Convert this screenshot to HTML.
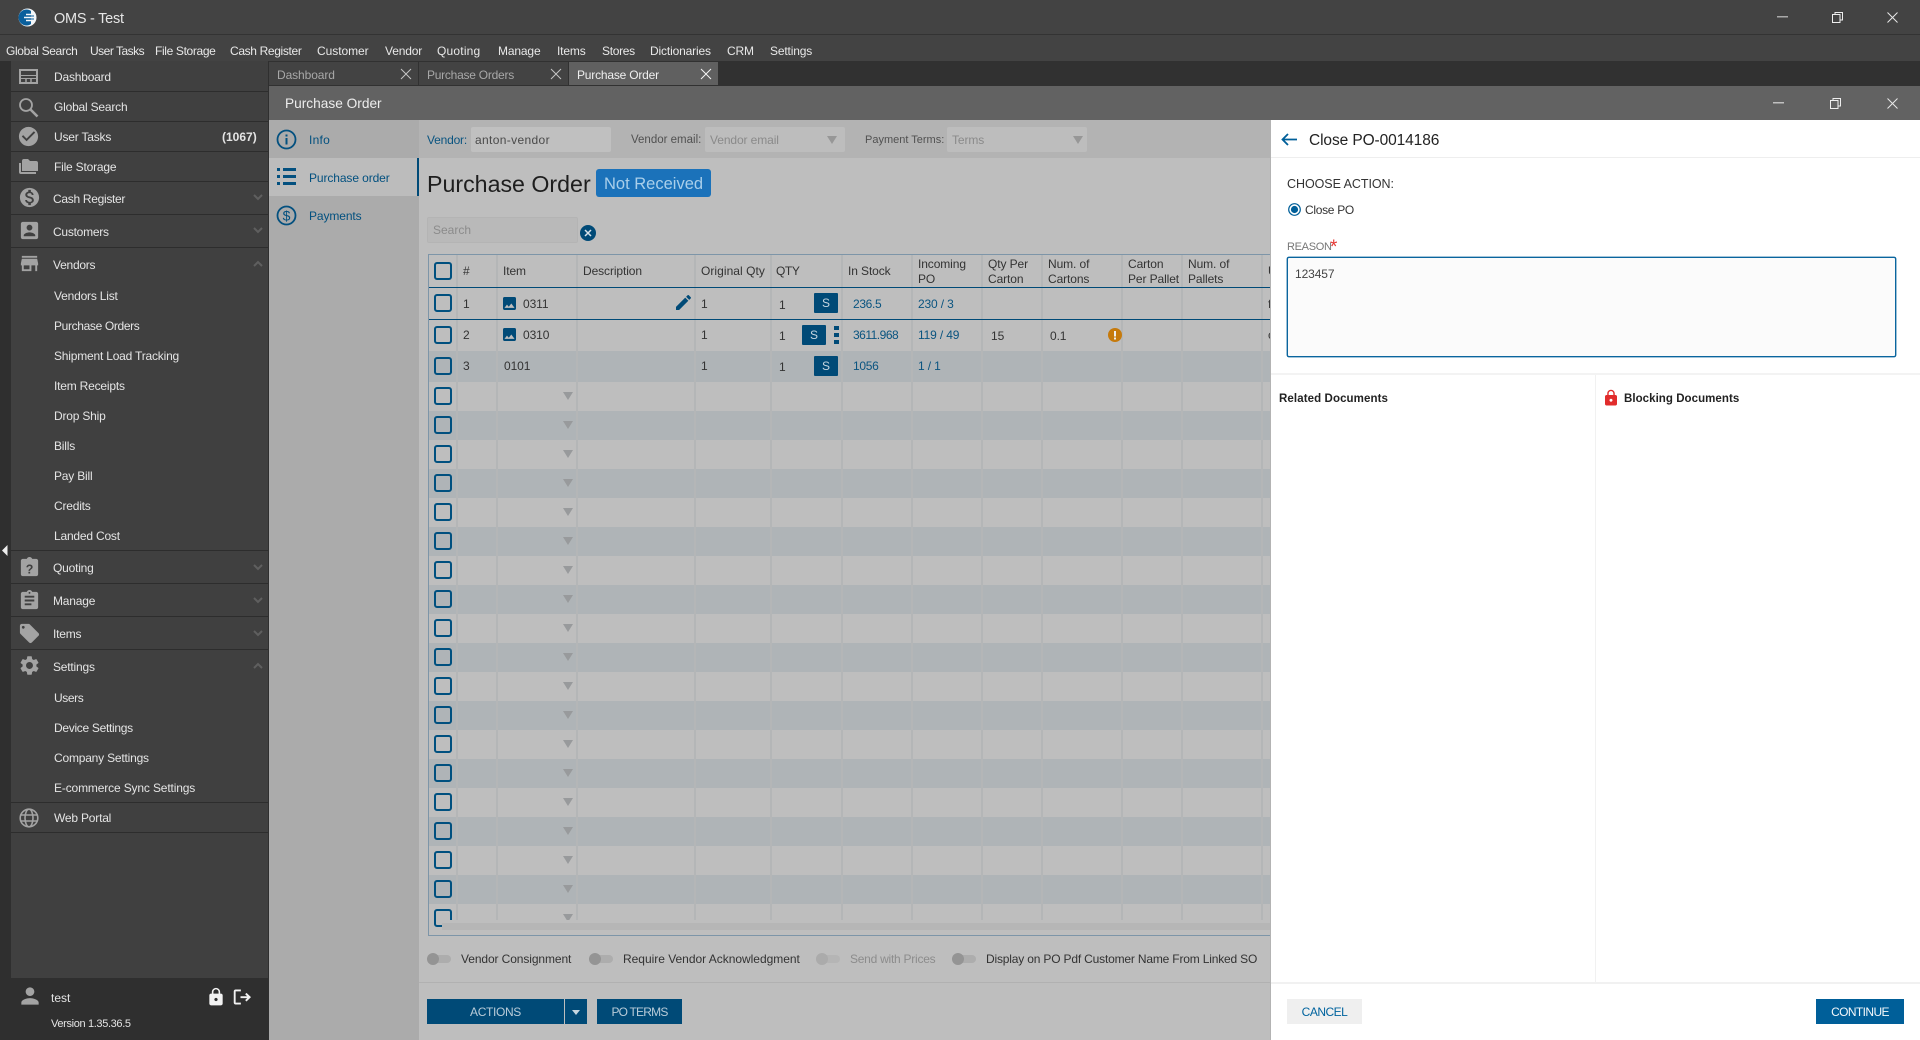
<!DOCTYPE html>
<html><head><meta charset="utf-8"><title>OMS - Test</title>
<style>
html,body{margin:0;padding:0;width:1920px;height:1040px;overflow:hidden;background:#404040;font-family:"Liberation Sans",sans-serif;font-size:12px}
.a{position:absolute}
.t{position:absolute;white-space:nowrap;line-height:16px;height:16px}
svg{position:absolute;overflow:visible}
.m{color:#e8e8e8;top:43px;letter-spacing:-.15px}
.s{color:#e4e4e4;left:54px;letter-spacing:-.2px;margin-top:1px}
.s2{left:53px}
.ln{position:absolute;left:11px;width:257px;height:1px;background:#2d2d2d}
.ic{fill:#a3a3a3}
.ch{fill:none;stroke:#5f5f5f;stroke-width:2}
.n{color:#02507f;left:309px;letter-spacing:-.1px}
.tb{color:#333;letter-spacing:-.1px}
.lk{color:#0a5480;letter-spacing:-.15px}
.vl{position:absolute;top:0;width:2px;height:680px;background:#b4b6b7}
.cb{position:absolute;left:5px;width:14px;height:14px;border:2px solid #00507f;border-radius:3px;box-sizing:content-box}
.ar{position:absolute;left:134px;width:0;height:0;border-left:5px solid transparent;border-right:5px solid transparent;border-top:8px solid #989a9c}
.alt{position:absolute;left:0;width:842px;height:29px;background:#afb4b7}
.sb{position:absolute;width:24px;height:20px;background:#004a77;color:#c6d6e0;text-align:center;line-height:20px;font-size:12px;border-radius:1px}
.tr{position:absolute;top:955px;width:24px;height:8px;background:#adadad;border-radius:4px}
.tr i{position:absolute;left:0;top:-2px;width:12px;height:12px;border-radius:6px;background:#949494}
.dd{position:absolute;width:0;height:0;border-left:5px solid transparent;border-right:5px solid transparent;border-top:8px solid #979797;top:136px}
</style></head>
<body>
<!-- top bars -->
<div class="a" style="left:0;top:0;width:1920px;height:61px;background:#434343"></div>
<div class="a" style="left:0;top:34px;width:1920px;height:1px;background:#333"></div>
<svg style="left:18px;top:8px" width="19" height="19" viewBox="0 0 19 19"><circle cx="9.500" cy="9.500" r="9" fill="#f4f6f8"/><circle cx="8.500" cy="9.500" r="8" fill="#0a5f9c"/><path d="M8 6.500h8M6 9.500h11M8 12.500h8" stroke="#f4f6f8" stroke-width="1.500"/><path d="M13 2.500C15.500 4 17.500 7 17.500 9.500S15.500 15 13 16.500Z" fill="#f4f6f8"/><path d="M10 8h6M10 11h6" stroke="#0a5f9c" stroke-width="1"/></svg>
<div class="t" style="left:54px;top:11px;color:#e6e6e6;font-size:14.500px;letter-spacing:-.25px">OMS - Test</div>
<svg style="left:1777px;top:16px" width="11" height="2"><rect width="11" height="1.500" fill="#a9a9a9"/></svg>
<svg style="left:1832px;top:12px" width="11" height="11" fill="none" stroke="#eee"><rect x=".5" y="2.500" width="7.500" height="8"/><path d="M3 2.500V.5h7.500v7.500H8"/></svg>
<svg style="left:1887px;top:12px" width="11" height="11" stroke="#e8e8e8" stroke-width="1"><path d="M.5.5l10 10M10.500.5l-10 10"/></svg>
<div class="t m" style="left:6px;letter-spacing:-.35px">Global Search</div>
<div class="t m" style="left:90px;letter-spacing:-.5px">User Tasks</div>
<div class="t m" style="left:155px;letter-spacing:-.35px">File Storage</div>
<div class="t m" style="left:230px;letter-spacing:-.35px">Cash Register</div>
<div class="t m" style="left:317px;letter-spacing:-.05px">Customer</div>
<div class="t m" style="left:385px">Vendor</div>
<div class="t m" style="left:437px;letter-spacing:.2px">Quoting</div>
<div class="t m" style="left:498px">Manage</div>
<div class="t m" style="left:557px">Items</div>
<div class="t m" style="left:602px;letter-spacing:-.3px">Stores</div>
<div class="t m" style="left:650px">Dictionaries</div>
<div class="t m" style="left:727px">CRM</div>
<div class="t m" style="left:770px">Settings</div>

<!-- left strip + sidebar -->
<div class="a" style="left:0;top:61px;width:11px;height:979px;background:#2f2f2f"></div>
<div class="a" style="left:11px;top:61px;width:257px;height:917px;background:#404040"></div>
<div class="a" style="left:0;top:978px;width:269px;height:62px;background:#2f2f2f"></div>
<div class="a" style="left:268px;top:61px;width:1px;height:979px;background:#2f2f2f"></div>
<svg style="left:2px;top:545px" width="6" height="11"><path d="M5.500 0v11L0 5.500Z" fill="#eee"/></svg>
<div class="ln" style="top:91px"></div><div class="ln" style="top:121px"></div><div class="ln" style="top:151px"></div><div class="ln" style="top:181px"></div><div class="ln" style="top:214px"></div><div class="ln" style="top:247px"></div><div class="ln" style="top:550px"></div><div class="ln" style="top:583px"></div><div class="ln" style="top:616px"></div><div class="ln" style="top:649px"></div><div class="ln" style="top:802px"></div><div class="ln" style="top:832px"></div>

<svg style="left:19px;top:69px" width="19" height="15" fill="none" stroke="#a3a3a3" stroke-width="2"><rect x="1" y="1" width="17" height="13"/><path d="M1 6.500h17M1 9.500h17" stroke-width="1"/><path d="M7 9v5M12 9v5" stroke-width="1.500"/></svg>
<svg style="left:18px;top:97px" width="21" height="21" viewBox="0 0 21 21" fill="none" stroke="#a3a3a3"><circle cx="8" cy="8" r="6" stroke-width="1.800"/><path d="M12.500 12.500l7 7" stroke-width="2.600"/></svg>
<svg class="ic" style="left:17px;top:125px" width="23" height="23" viewBox="0 0 24 24"><path d="M12 2C6.480 2 2 6.480 2 12s4.480 10 10 10 10-4.480 10-10S17.520 2 12 2zm-2 15l-5-5 1.410-1.410L10 14.170l7.590-7.590L19 8l-9 9z"/></svg>
<svg class="ic" style="left:19px;top:159px" width="19" height="15" viewBox="0 0 19 15"><path d="M0 4h2v9h15v2H2a2 2 0 0 1-2-2Z"/><path d="M3 2a2 2 0 0 1 2-2h4l2 2h6a2 2 0 0 1 2 2v8H3Z"/></svg>
<svg class="ic" style="left:18px;top:186px" width="23" height="23" viewBox="0 0 24 24"><path d="M12 2C6.480 2 2 6.480 2 12s4.480 10 10 10 10-4.480 10-10S17.520 2 12 2zm1.410 16.090V20h-2.670v-1.930c-1.710-.36-3.160-1.460-3.270-3.400h1.960c.1 1.050.82 1.870 2.650 1.870 1.960 0 2.400-.98 2.400-1.590 0-.83-.44-1.610-2.670-2.140-2.480-.6-4.180-1.620-4.180-3.670 0-1.720 1.390-2.840 3.110-3.210V4h2.670v1.950c1.860.45 2.790 1.860 2.850 3.390H14.300c-.05-1.110-.64-1.870-2.220-1.870-1.500 0-2.400.68-2.400 1.640 0 .84.65 1.390 2.670 1.910s4.180 1.390 4.180 3.910c-.01 1.830-1.380 2.830-3.120 3.160z"/></svg>
<svg class="ic" style="left:18px;top:219px" width="23" height="23" viewBox="0 0 24 24"><path d="M3 5v14c0 1.100.89 2 2 2h14c1.100 0 2-.9 2-2V5c0-1.100-.9-2-2-2H5c-1.110 0-2 .9-2 2zm12 4c0 1.660-1.340 3-3 3s-3-1.340-3-3 1.340-3 3-3 3 1.340 3 3zm-9 8c0-2 4-3.100 6-3.100s6 1.100 6 3.100v1H6v-1z"/></svg>
<svg class="ic" style="left:18px;top:252px" width="23" height="23" viewBox="0 0 24 24"><path d="M20 4H4v2h16V4zm1 10v-2l-1-5H4l-1 5v2h1v6h10v-6h4v6h2v-6h1zm-9 4H6v-4h6v4z"/></svg>
<svg class="ic" style="left:18px;top:556px" width="23" height="23" viewBox="0 0 24 24"><path d="M19 3h-4.180C14.400 1.840 13.300 1 12 1c-1.300 0-2.400.84-2.820 2H5c-1.100 0-2 .9-2 2v14c0 1.100.9 2 2 2h14c1.100 0 2-.9 2-2V5c0-1.100-.9-2-2-2z"/><text x="12" y="18" text-anchor="middle" font-size="13" font-weight="bold" fill="#404040" font-family="Liberation Sans">?</text></svg>
<svg class="ic" style="left:18px;top:589px" width="23" height="23" viewBox="0 0 24 24"><path d="M19 3h-4.180C14.400 1.840 13.300 1 12 1c-1.300 0-2.400.84-2.820 2H5c-1.100 0-2 .9-2 2v14c0 1.100.9 2 2 2h14c1.100 0 2-.9 2-2V5c0-1.100-.9-2-2-2zm-7 0c.55 0 1 .45 1 1s-.45 1-1 1-1-.45-1-1 .45-1 1-1zm2 14H7v-2h7v2zm3-4H7v-2h10v2zm0-4H7V7h10v2z"/></svg>
<svg class="ic" style="left:18px;top:622px" width="23" height="23" viewBox="0 0 24 24"><path d="M21.410 11.580l-9-9C12.050 2.220 11.550 2 11 2H4c-1.100 0-2 .9-2 2v7c0 .55.22 1.050.59 1.420l9 9c.36.36.86.58 1.410.58.55 0 1.050-.22 1.410-.59l7-7c.37-.36.59-.86.59-1.410 0-.55-.23-1.060-.59-1.420zM5.500 7C4.670 7 4 6.330 4 5.500S4.670 4 5.500 4 7 4.670 7 5.500 6.330 7 5.500 7z"/></svg>
<svg class="ic" style="left:18px;top:654px" width="23" height="23" viewBox="0 0 24 24"><path d="M19.140 12.940c.04-.3.06-.61.06-.94 0-.32-.02-.64-.07-.94l2.030-1.580c.18-.14.23-.41.12-.61l-1.920-3.320c-.12-.22-.37-.29-.59-.22l-2.390.96c-.5-.38-1.030-.7-1.620-.94l-.36-2.540c-.04-.24-.24-.41-.48-.41h-3.840c-.24 0-.43.17-.47.41l-.36 2.540c-.59.24-1.130.57-1.620.94l-2.390-.96c-.22-.08-.47 0-.59.22L2.740 8.870c-.12.21-.08.47.12.61l2.030 1.580c-.05.3-.09.63-.09.94s.02.64.07.94l-2.030 1.580c-.18.14-.23.41-.12.61l1.920 3.320c.12.22.37.29.59.22l2.390-.96c.5.38 1.030.7 1.620.94l.36 2.540c.05.24.24.41.48.41h3.840c.24 0 .44-.17.47-.41l.36-2.540c.59-.24 1.130-.56 1.620-.94l2.390.96c.22.08.47 0 .59-.22l1.920-3.320c.12-.22.07-.47-.12-.61l-2.010-1.580zM12 15.600c-1.980 0-3.600-1.620-3.600-3.600s1.620-3.600 3.600-3.600 3.600 1.620 3.600 3.600-1.620 3.600-3.600 3.600z"/></svg>
<svg style="left:19px;top:808px" width="20" height="20" viewBox="0 0 20 20" fill="none" stroke="#a3a3a3" stroke-width="1.600"><circle cx="10" cy="10" r="8.800"/><ellipse cx="10" cy="10" rx="4" ry="8.800"/><path d="M1.500 7h17M1.500 13h17"/></svg>

<svg class="ch" style="left:253px;top:194px" width="10" height="7"><path d="M1 1l4 4 4-4"/></svg>
<svg class="ch" style="left:253px;top:227px" width="10" height="7"><path d="M1 1l4 4 4-4"/></svg>
<svg class="ch" style="left:253px;top:260px" width="10" height="7"><path d="M1 6l4-4 4 4"/></svg>
<svg class="ch" style="left:253px;top:564px" width="10" height="7"><path d="M1 1l4 4 4-4"/></svg>
<svg class="ch" style="left:253px;top:597px" width="10" height="7"><path d="M1 1l4 4 4-4"/></svg>
<svg class="ch" style="left:253px;top:630px" width="10" height="7"><path d="M1 1l4 4 4-4"/></svg>
<svg class="ch" style="left:253px;top:662px" width="10" height="7"><path d="M1 6l4-4 4 4"/></svg>

<div class="t s" style="top:68px">Dashboard</div>
<div class="t s" style="top:98px">Global Search</div>
<div class="t s" style="top:128px">User Tasks</div>
<div class="t" style="left:222px;top:129px;color:#e4e4e4;font-weight:bold">(1067)</div>
<div class="t s" style="top:158px">File Storage</div>
<div class="t s s2" style="top:190px;letter-spacing:-.3px">Cash Register</div>
<div class="t s s2" style="top:223px;letter-spacing:-.25px">Customers</div>
<div class="t s s2" style="top:256px;letter-spacing:-.25px">Vendors</div>
<div class="t s" style="top:287px">Vendors List</div>
<div class="t s" style="top:317px;letter-spacing:-.35px">Purchase Orders</div>
<div class="t s" style="top:347px">Shipment Load Tracking</div>
<div class="t s" style="top:377px">Item Receipts</div>
<div class="t s" style="top:407px">Drop Ship</div>
<div class="t s" style="top:437px">Bills</div>
<div class="t s" style="top:467px">Pay Bill</div>
<div class="t s" style="top:497px">Credits</div>
<div class="t s" style="top:527px">Landed Cost</div>
<div class="t s s2" style="top:559px">Quoting</div>
<div class="t s s2" style="top:592px">Manage</div>
<div class="t s s2" style="top:625px">Items</div>
<div class="t s s2" style="top:658px">Settings</div>
<div class="t s" style="top:689px;letter-spacing:-.4px">Users</div>
<div class="t s" style="top:719px;letter-spacing:-.3px">Device Settings</div>
<div class="t s" style="top:749px">Company Settings</div>
<div class="t s" style="top:779px;letter-spacing:-.15px">E-commerce Sync Settings</div>
<div class="t s" style="top:809px">Web Portal</div>

<svg style="left:17px;top:983px" width="26" height="26" viewBox="0 0 24 24" fill="#a3a3a3"><path d="M12 12c2.210 0 4-1.790 4-4s-1.790-4-4-4-4 1.790-4 4 1.790 4 4 4zm0 2c-2.670 0-8 1.340-8 4v2h16v-2c0-2.660-5.330-4-8-4z"/></svg>
<div class="t" style="left:51px;top:990px;color:#e4e4e4;font-size:12px">test</div>
<svg style="left:206px;top:987px" width="20" height="20" viewBox="0 0 24 24" fill="#f2f2f2"><path d="M18 8h-1V6c0-2.760-2.240-5-5-5S7 3.240 7 6v2H6c-1.100 0-2 .9-2 2v10c0 1.100.9 2 2 2h12c1.100 0 2-.9 2-2V10c0-1.100-.9-2-2-2zm-6 9c-1.100 0-2-.9-2-2s.9-2 2-2 2 .9 2 2-.9 2-2 2zm3.100-9H8.900V6c0-1.710 1.390-3.100 3.100-3.100 1.710 0 3.100 1.390 3.100 3.100v2z"/></svg>
<svg style="left:233px;top:988px" width="18" height="18" viewBox="0 0 24 24" fill="#f2f2f2"><path d="M18 6.500l-1.800 1.800L18.900 11H10v2.500h8.900l-2.700 2.700L18 18l6-5.800zM3.500 4.500h7V2h-7C2.100 2 1 3.100 1 4.500v15C1 20.900 2.100 22 3.500 22h7v-2.500h-7z"/></svg>
<div class="t" style="left:51px;top:1016px;color:#e4e4e4;font-size:11px;letter-spacing:-.35px">Version 1.35.36.5</div>

<!-- tabs -->
<div class="a" style="left:269px;top:61px;width:1651px;height:25px;background:#313131"></div>
<div class="a" style="left:269px;top:62px;width:149px;height:23px;background:#434343"></div>
<div class="a" style="left:419px;top:62px;width:149px;height:23px;background:#434343"></div>
<div class="a" style="left:569px;top:62px;width:149px;height:23px;background:#606060"></div>
<div class="t" style="left:277px;top:67px;color:#a8a8a8;letter-spacing:-.1px">Dashboard</div>
<div class="t" style="left:427px;top:67px;color:#a8a8a8;letter-spacing:-.25px">Purchase Orders</div>
<div class="t" style="left:577px;top:67px;color:#efefef;letter-spacing:-.2px">Purchase Order</div>
<svg style="left:401px;top:69px" width="10" height="10" stroke="#c4c4c4"><path d="M0 0l10 10M10 0L0 10"/></svg>
<svg style="left:551px;top:69px" width="10" height="10" stroke="#c4c4c4"><path d="M0 0l10 10M10 0L0 10"/></svg>
<svg style="left:701px;top:69px" width="10" height="10" stroke="#f4f4f4"><path d="M0 0l10 10M10 0L0 10"/></svg>

<!-- window header -->
<div class="a" style="left:269px;top:86px;width:1651px;height:34px;background:#626262"></div>
<div class="t" style="left:285px;top:96px;color:#ededed;font-size:13.700px">Purchase Order</div>
<svg style="left:1773px;top:102px" width="11" height="2"><rect width="11" height="1.500" fill="#c0c0c0"/></svg>
<svg style="left:1830px;top:98px" width="11" height="11" fill="none" stroke="#eee"><rect x=".5" y="2.500" width="7.500" height="8"/><path d="M3 2.500V.5h7.500v7.500H8"/></svg>
<svg style="left:1887px;top:98px" width="11" height="11" stroke="#e8e8e8"><path d="M.5.5l10 10M10.500.5l-10 10"/></svg>

<!-- nav -->
<div class="a" style="left:269px;top:120px;width:150px;height:920px;background:#ababab"></div>
<div class="a" style="left:269px;top:158px;width:148px;height:38px;background:#bcbcbc"></div>
<div class="a" style="left:417px;top:158px;width:2px;height:38px;background:#004a77"></div>
<svg style="left:276px;top:129px" width="21" height="21" viewBox="0 0 21 21"><circle cx="10.500" cy="10.500" r="9" fill="none" stroke="#03507f" stroke-width="1.800"/><rect x="9.500" y="9" width="2" height="6.500" fill="#03507f"/><rect x="9.500" y="5.500" width="2" height="2" fill="#03507f"/></svg>
<svg style="left:276px;top:167px" width="21" height="21" viewBox="0 0 21 21" fill="#03507f"><rect x="1" y="1" width="3" height="3"/><rect x="7" y="1" width="13" height="3"/><rect x="1" y="8" width="3" height="3"/><rect x="7" y="8" width="13" height="3"/><rect x="1" y="15" width="3" height="3"/><rect x="7" y="15" width="13" height="3"/></svg>
<svg style="left:276px;top:205px" width="21" height="21" viewBox="0 0 21 21"><circle cx="10.500" cy="10.500" r="9" fill="none" stroke="#03507f" stroke-width="1.800"/><text x="10.500" y="15.500" text-anchor="middle" font-size="14" fill="#03507f" font-family="Liberation Sans">$</text></svg>
<div class="t n" style="top:132px;letter-spacing:.25px;font-weight:normal">Info</div>
<div class="t n" style="top:170px">Purchase order</div>
<div class="t n" style="top:208px">Payments</div>

<!-- main -->
<div class="a" style="left:419px;top:120px;width:852px;height:920px;background:#bebebe"></div>
<div class="a" style="left:419px;top:120px;width:852px;height:38px;background:#b3b3b3"></div>
<div class="t" style="left:427px;top:132px;color:#0a5480;letter-spacing:-.2px">Vendor:</div>
<div class="a" style="left:471px;top:127px;width:140px;height:25px;background:#c0c0c0;border-radius:2px"></div>
<div class="t" style="left:475px;top:132px;color:#4a4a4a;letter-spacing:.35px">anton-vendor</div>
<div class="t" style="left:631px;top:132px;color:#515151;font-size:11.500px">Vendor email:</div>
<div class="a" style="left:705px;top:127px;width:140px;height:25px;background:#bdbdbd;border-radius:2px"></div>
<div class="t" style="left:710px;top:132px;color:#8a8a8a;letter-spacing:-.1px">Vendor email</div>
<div class="dd" style="left:827px"></div>
<div class="t" style="left:865px;top:132px;color:#515151;font-size:11px">Payment Terms:</div>
<div class="a" style="left:947px;top:127px;width:140px;height:25px;background:#bdbdbd;border-radius:2px"></div>
<div class="t" style="left:952px;top:132px;color:#8a8a8a;letter-spacing:-.1px">Terms</div>
<div class="dd" style="left:1073px"></div>

<div class="t" style="left:427px;top:172px;height:24px;line-height:24px;color:#1e1e1e;font-size:23.200px">Purchase Order</div>
<div class="a" style="left:596px;top:169px;width:115px;height:28px;background:#1b72ba;border-radius:3px"></div>
<div class="t" style="left:604px;top:176px;color:#a9cfea;font-size:16.500px">Not Received</div>
<div class="a" style="left:427px;top:217px;width:149px;height:24px;background:#b9b9b9;border:1px solid #b4b4b4;border-radius:2px"></div>
<div class="t" style="left:433px;top:222px;color:#8b8b8b">Search</div>
<svg style="left:580px;top:225px" width="16" height="16"><circle cx="8" cy="8" r="8" fill="#004a77"/><path d="M5 5l6 6M11 5l-6 6" stroke="#d7e2ea" stroke-width="1.500"/></svg>

<!-- table -->
<div class="a" style="left:428px;top:254px;width:842px;height:680px;overflow:hidden;border-top:1px solid #7d95a8;border-left:1px solid #7d95a8;border-bottom:1px solid #7d95a8;box-sizing:content-box">
<div style="position:absolute;left:0;top:0;width:842px;height:680px">
<div class="alt" style="top:96px;height:31px"></div>
<div class="alt" style="top:156px"></div><div class="alt" style="top:214px"></div><div class="alt" style="top:272px"></div><div class="alt" style="top:330px"></div><div class="alt" style="top:388px"></div><div class="alt" style="top:446px"></div><div class="alt" style="top:504px"></div><div class="alt" style="top:562px"></div><div class="alt" style="top:620px"></div>
<div class="vl" style="left:27px"></div><div class="vl" style="left:67px"></div><div class="vl" style="left:147px"></div><div class="vl" style="left:265px"></div><div class="vl" style="left:341px"></div><div class="vl" style="left:412px"></div><div class="vl" style="left:482px"></div><div class="vl" style="left:552px"></div><div class="vl" style="left:612px"></div><div class="vl" style="left:692px"></div><div class="vl" style="left:752px"></div><div class="vl" style="left:832px"></div>
<div class="a" style="left:0;top:32px;width:842px;height:1px;background:#004a77"></div>
<div class="a" style="left:0;top:64px;width:842px;height:1px;background:#004a77"></div>

<div class="cb" style="top:7px"></div><div class="cb" style="top:39px"></div><div class="cb" style="top:71px"></div><div class="cb" style="top:102px"></div>
<div class="cb" style="top:132px"></div><div class="cb" style="top:161px"></div><div class="cb" style="top:190px"></div><div class="cb" style="top:219px"></div><div class="cb" style="top:248px"></div><div class="cb" style="top:277px"></div><div class="cb" style="top:306px"></div><div class="cb" style="top:335px"></div><div class="cb" style="top:364px"></div><div class="cb" style="top:393px"></div><div class="cb" style="top:422px"></div><div class="cb" style="top:451px"></div><div class="cb" style="top:480px"></div><div class="cb" style="top:509px"></div><div class="cb" style="top:538px"></div><div class="cb" style="top:567px"></div><div class="cb" style="top:596px"></div><div class="cb" style="top:625px"></div><div class="cb" style="top:654px"></div>

<div class="ar" style="top:137px"></div><div class="ar" style="top:166px"></div><div class="ar" style="top:195px"></div><div class="ar" style="top:224px"></div><div class="ar" style="top:253px"></div><div class="ar" style="top:282px"></div><div class="ar" style="top:311px"></div><div class="ar" style="top:340px"></div><div class="ar" style="top:369px"></div><div class="ar" style="top:398px"></div><div class="ar" style="top:427px"></div><div class="ar" style="top:456px"></div><div class="ar" style="top:485px"></div><div class="ar" style="top:514px"></div><div class="ar" style="top:543px"></div><div class="ar" style="top:572px"></div><div class="ar" style="top:601px"></div><div class="ar" style="top:630px"></div><div class="ar" style="top:659px"></div>

<div class="t tb" style="left:34px;top:8px">#</div>
<div class="t tb" style="left:74px;top:8px">Item</div>
<div class="t tb" style="left:154px;top:8px">Description</div>
<div class="t tb" style="left:272px;top:8px;letter-spacing:.05px">Original Qty</div>
<div class="t tb" style="left:347px;top:8px;letter-spacing:-.4px">QTY</div>
<div class="t tb" style="left:419px;top:8px">In Stock</div>
<div class="t tb" style="left:489px;top:1px">Incoming</div><div class="t tb" style="left:489px;top:16px">PO</div>
<div class="t tb" style="left:559px;top:1px">Qty Per</div><div class="t tb" style="left:559px;top:16px">Carton</div>
<div class="t tb" style="left:619px;top:1px">Num. of</div><div class="t tb" style="left:619px;top:16px">Cartons</div>
<div class="t tb" style="left:699px;top:1px">Carton</div><div class="t tb" style="left:699px;top:16px">Per Pallet</div>
<div class="t tb" style="left:759px;top:1px">Num. of</div><div class="t tb" style="left:759px;top:16px">Pallets</div>
<div class="t tb" style="left:839px;top:8px">U</div>
<div class="t tb" style="left:839px;top:41px">f</div><div class="t tb" style="left:839px;top:72px">c</div>

<div class="t tb" style="left:34px;top:41px">1</div><div class="t tb" style="left:34px;top:72px">2</div><div class="t tb" style="left:34px;top:103px">3</div>
<svg style="left:74px;top:42px" width="13" height="13" viewBox="3 3 18 18" fill="#004a77"><path d="M21 19V5c0-1.100-.9-2-2-2H5c-1.100 0-2 .9-2 2v14c0 1.100.9 2 2 2h14c1.100 0 2-.9 2-2zM8.500 13.500l2.500 3.010L14.500 12l4.500 6H5l3.500-4.500z"/></svg>
<svg style="left:74px;top:73px" width="13" height="13" viewBox="3 3 18 18" fill="#004a77"><path d="M21 19V5c0-1.100-.9-2-2-2H5c-1.100 0-2 .9-2 2v14c0 1.100.9 2 2 2h14c1.100 0 2-.9 2-2zM8.500 13.500l2.500 3.010L14.500 12l4.500 6H5l3.500-4.500z"/></svg>
<div class="t tb" style="left:94px;top:41px">0311</div><div class="t tb" style="left:94px;top:72px">0310</div><div class="t tb" style="left:75px;top:103px">0101</div>
<svg style="left:247px;top:40px" width="15" height="15" viewBox="3 3 18 18" fill="#004a77"><path d="M3 17.250V21h3.750L17.810 9.940l-3.750-3.750L3 17.250zM20.710 7.040c.39-.39.39-1.020 0-1.410l-2.340-2.340c-.39-.39-1.020-.39-1.410 0l-1.830 1.830 3.750 3.750 1.830-1.830z"/></svg>
<div class="t tb" style="left:272px;top:41px">1</div><div class="t tb" style="left:272px;top:72px">1</div><div class="t tb" style="left:272px;top:103px">1</div>
<div class="t tb" style="left:350px;top:42px">1</div><div class="t tb" style="left:350px;top:73px">1</div><div class="t tb" style="left:350px;top:104px">1</div>
<div class="sb" style="left:385px;top:38px">S</div><div class="sb" style="left:373px;top:70px">S</div><div class="sb" style="left:385px;top:101px">S</div>
<svg style="left:405px;top:71px" width="5" height="18" fill="#004a77"><rect width="5" height="4"/><rect y="7" width="5" height="4"/><rect y="14" width="5" height="4"/></svg>
<div class="t lk" style="left:424px;top:41px;letter-spacing:-.35px">236.5</div><div class="t lk" style="left:424px;top:72px;letter-spacing:-.5px">3611.968</div><div class="t lk" style="left:424px;top:103px;letter-spacing:-.3px">1056</div>
<div class="t lk" style="left:489px;top:41px">230 / 3</div><div class="t lk" style="left:489px;top:72px">119 / 49</div><div class="t lk" style="left:489px;top:103px">1 / 1</div>
<div class="t tb" style="left:562px;top:73px">15</div><div class="t tb" style="left:621px;top:73px">0.1</div>
<svg style="left:679px;top:73px" width="14" height="14"><circle cx="7" cy="7" r="7" fill="#c67a0c"/><rect x="6" y="3" width="2" height="5.500" fill="#eee"/><rect x="6" y="9.500" width="2" height="2" fill="#eee"/></svg>
<div class="a" style="left:13px;top:665px;width:829px;height:15px;background:#bebebe"></div>
<div class="a" style="left:13px;top:668px;width:829px;height:7px;background:#b6b6b6"></div>
</div></div>

<!-- toggles -->
<div class="tr" style="left:427px"><i></i></div><div class="t tb" style="left:461px;top:951px">Vendor Consignment</div>
<div class="tr" style="left:589px"><i></i></div><div class="t tb" style="left:623px;top:951px;letter-spacing:-.02px">Require Vendor Acknowledgment</div>
<div class="tr" style="left:816px;background:#b5b5b5"><i style="background:#ababab"></i></div><div class="t" style="left:850px;top:951px;color:#8c8c8c;letter-spacing:-.25px">Send with Prices</div>
<div class="tr" style="left:952px"><i></i></div><div class="t tb" style="left:986px;top:951px;letter-spacing:-.18px">Display on PO Pdf Customer Name From Linked SO</div>
<div class="a" style="left:419px;top:982px;width:852px;height:1px;background:#b1b1b1"></div>
<div class="a" style="left:427px;top:999px;width:137px;height:25px;background:#004a77"></div>
<div class="a" style="left:565px;top:999px;width:22px;height:25px;background:#004a77"></div>
<div class="a" style="left:572px;top:1010px;width:0;height:0;border-left:4px solid transparent;border-right:4px solid transparent;border-top:5px solid #c6d6e0"></div>
<div class="a" style="left:597px;top:999px;width:85px;height:25px;background:#004a77"></div>
<div class="t" style="left:427px;top:1004px;width:137px;text-align:center;color:#b9ccd9;letter-spacing:-.35px">ACTIONS</div>
<div class="t" style="left:597px;top:1004px;width:85px;text-align:center;color:#b9ccd9;letter-spacing:-.8px">PO TERMS</div>

<!-- right panel -->
<div class="a" style="left:1271px;top:120px;width:649px;height:920px;background:#fff"></div>
<div class="a" style="left:1270px;top:120px;width:1px;height:920px;background:#b3b3b3"></div>
<div class="a" style="left:1271px;top:157px;width:649px;height:1px;background:#eee"></div>
<svg style="left:1281px;top:133px" width="16" height="13" fill="none" stroke="#005f99" stroke-width="1.800"><path d="M16 6.500H2M7 1L1.500 6.500 7 12"/></svg>
<div class="t" style="left:1309px;top:133px;color:#222;font-size:15.500px;letter-spacing:-.1px">Close PO-0014186</div>
<div class="t" style="left:1287px;top:176px;color:#333;font-size:12.500px;letter-spacing:-.05px">CHOOSE ACTION:</div>
<svg style="left:1288px;top:203px" width="13" height="13"><circle cx="6.500" cy="6.500" r="5.800" fill="#fff" stroke="#005f99" stroke-width="1.200"/><circle cx="6.500" cy="6.500" r="3.600" fill="#005f99"/></svg>
<div class="t" style="left:1305px;top:202px;color:#333;letter-spacing:-.3px">Close PO</div>
<div class="t" style="left:1287px;top:239px;color:#777;font-size:11px;letter-spacing:-.3px">REASON</div>
<div class="t" style="left:1330px;top:238px;color:#e53935;font-size:19px;line-height:19px">*</div>
<div class="a" style="left:1287px;top:257px;width:607px;height:98px;background:#fbfbfb;border:1px solid #0a659e;border-radius:2px;box-shadow:0 0 0 .4px #0a659e"></div>
<div class="t" style="left:1295px;top:266px;color:#444;font-size:12px;letter-spacing:-.1px">123457</div>
<div class="a" style="left:1271px;top:373px;width:649px;height:2px;background:#f3f3f3"></div>
<div class="a" style="left:1595px;top:375px;width:1px;height:607px;background:#f1f1f1"></div>
<div class="t" style="left:1279px;top:391px;color:#222;font-weight:bold;font-size:11.500px;letter-spacing:.1px">Related Documents</div>
<svg style="left:1602px;top:389px" width="18" height="18" viewBox="0 0 24 24" fill="#e12c2c"><path d="M18 8h-1V6c0-2.760-2.240-5-5-5S7 3.240 7 6v2H6c-1.100 0-2 .9-2 2v10c0 1.100.9 2 2 2h12c1.100 0 2-.9 2-2V10c0-1.100-.9-2-2-2zm-6 9c-1.100 0-2-.9-2-2s.9-2 2-2 2 .9 2 2-.9 2-2 2zm3.100-9H8.900V6c0-1.710 1.390-3.100 3.100-3.100 1.710 0 3.100 1.390 3.100 3.100v2z"/></svg>
<div class="t" style="left:1624px;top:391px;color:#222;font-weight:bold;font-size:11.500px;letter-spacing:.05px">Blocking Documents</div>
<div class="a" style="left:1271px;top:982px;width:649px;height:2px;background:#f1f1f1"></div>
<div class="a" style="left:1287px;top:999px;width:75px;height:25px;background:#efefef"></div>
<div class="t" style="left:1287px;top:1004px;width:75px;text-align:center;color:#00639e;letter-spacing:-.5px">CANCEL</div>
<div class="a" style="left:1816px;top:999px;width:88px;height:25px;background:#005f99"></div>
<div class="t" style="left:1816px;top:1004px;width:88px;text-align:center;color:#f4f8fb;letter-spacing:-.6px">CONTINUE</div>
</body></html>
